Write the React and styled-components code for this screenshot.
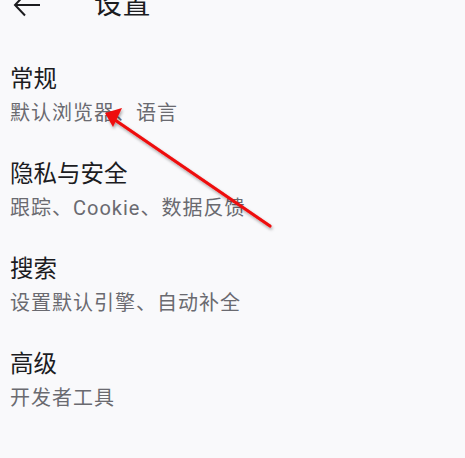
import React from "react";
import styled, { createGlobalStyle } from "styled-components";

const Global = createGlobalStyle`
  html, body { margin: 0; padding: 0; background: #f9f9fb; }
  body { font-family: Roboto, "Noto Sans CJK SC", sans-serif; }
`;

const Page = styled.div`
  position: relative;
  width: 465px;
  height: 458px;
  overflow: hidden;
  background: #f9f9fb;
`;

const Header = styled.div`
  display: flex;
  align-items: center;
  height: 44px;
  margin-top: -17px;
  padding-left: 13px;
`;

const Back = styled.div`
  width: 28px;
  height: 24px;
  display: flex;
  align-items: center;
`;

const Title = styled.div`
  margin-left: 53px;
  font-size: 28px;
  line-height: 36px;
  color: #1c1c1f;
  letter-spacing: 0.5px;
`;

const List = styled.div`
  display: flex;
  flex-direction: column;
  gap: 32px;
  padding: 37px 0 0 10px;
`;

const Item = styled.div`
  display: flex;
  flex-direction: column;
  gap: 5px;
`;

const ItemTitle = styled.div`
  font-size: 23.5px;
  line-height: 30px;
  color: #1c1c1f;
`;

const ItemSub = styled.div`
  font-size: 20px;
  line-height: 28px;
  color: #6a6a70;
  letter-spacing: 1px;
`;

const Overlay = styled.svg`
  position: absolute;
  left: 0;
  top: 0;
  pointer-events: none;
`;

const items = [
  ["常规", "默认浏览器、语言"],
  ["隐私与安全", "跟踪、Cookie、数据反馈"],
  ["搜索", "设置默认引擎、自动补全"],
  ["高级", "开发者工具"],
];

export default function App() {
  return (
    <Page>
      <Global />
      <Header>
        <Back>
          <svg width="28" height="24" viewBox="0 0 28 24">
            <path d="M2 12 H27 M12 1.5 L2 12 L12 22.5" fill="none" stroke="#1c1c1f" strokeWidth="2" />
          </svg>
        </Back>
        <Title>设置</Title>
      </Header>
      <List>
        {items.map(([t, s]) => (
          <Item key={t}>
            <ItemTitle>{t}</ItemTitle>
            <ItemSub>{s}</ItemSub>
          </Item>
        ))}
      </List>
      <Overlay width="465" height="458" viewBox="0 0 465 458">
        <defs>
          <filter id="sh" x="-20%" y="-20%" width="140%" height="140%">
            <feDropShadow dx="1" dy="2" stdDeviation="1.5" floodColor="#000" floodOpacity="0.35" />
          </filter>
        </defs>
        <g filter="url(#sh)">
          <line x1="270" y1="226" x2="115" y2="120" stroke="#ee0a0a" strokeWidth="3.2" strokeLinecap="round" />
          <polygon points="105,113 122,108 113,127" fill="#ee0a0a" />
        </g>
      </Overlay>
    </Page>
  );
}
